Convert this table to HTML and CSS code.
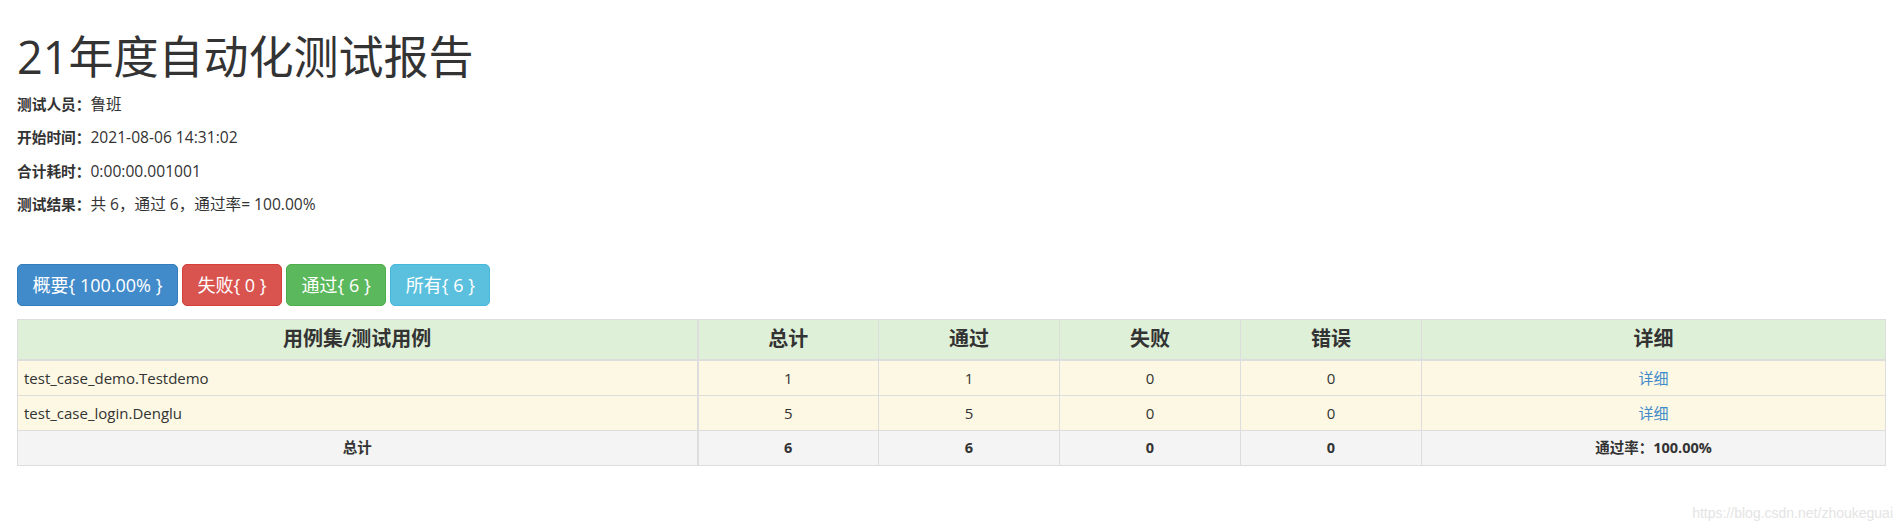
FILE: index.html
```html
<!DOCTYPE html>
<html lang="zh-CN">
<head>
<meta charset="utf-8">
<title>21年度自动化测试报告</title>
<link rel="stylesheet" href="styles.css">
</head>
<body>
<div class="container">
  <h1 class="title">21年度自动化测试报告</h1>
  <div class="attrs">
    <p class="attr"><strong>测试人员：</strong><span class="val">鲁班</span></p>
    <p class="attr"><strong>开始时间：</strong><span class="val">2021-08-06 14:31:02</span></p>
    <p class="attr"><strong>合计耗时：</strong><span class="val">0:00:00.001001</span></p>
    <p class="attr"><strong>测试结果：</strong><span class="val">共 6，通过 6，通过率= 100.00%</span></p>
  </div>
  <div class="btns">
    <a class="btn btn-primary">概要{ 100.00% }</a>
    <a class="btn btn-danger">失败{ 0 }</a>
    <a class="btn btn-success">通过{ 6 }</a>
    <a class="btn btn-info">所有{ 6 }</a>
  </div>
  <table class="result">
    <colgroup>
      <col class="c-name">
      <col class="c-num">
      <col class="c-num">
      <col class="c-num">
      <col class="c-num">
      <col class="c-detail">
    </colgroup>
    <thead>
      <tr class="head">
        <th class="first">用例集/测试用例</th>
        <th>总计</th>
        <th>通过</th>
        <th>失败</th>
        <th>错误</th>
        <th>详细</th>
      </tr>
    </thead>
    <tbody>
      <tr class="row">
        <td class="first name">test_case_demo.Testdemo</td>
        <td>1</td>
        <td>1</td>
        <td>0</td>
        <td>0</td>
        <td><a class="link">详细</a></td>
      </tr>
      <tr class="row">
        <td class="first name">test_case_login.Denglu</td>
        <td>5</td>
        <td>5</td>
        <td>0</td>
        <td>0</td>
        <td><a class="link">详细</a></td>
      </tr>
      <tr class="total">
        <td class="first">总计</td>
        <td>6</td>
        <td>6</td>
        <td>0</td>
        <td>0</td>
        <td>通过率：100.00%</td>
      </tr>
    </tbody>
  </table>
</div>
<div class="watermark">https://blog.csdn.net/zhoukeguai</div>
</body>
</html>
```

FILE: styles.css
```css
html, body {
  margin: 0;
  padding: 0;
}
body {
  position: relative;
  min-height: 100vh;
  background: #fff;
  color: #333;
  font-family: "Open Sans", "Noto Sans CJK SC", sans-serif;
  font-size: 15px;
}
.container {
  padding: 0 17px;
}
.title {
  margin: 30px 0 10px;
  font-size: 45px;
  font-weight: 400;
  line-height: 54px;
  color: #333;
}
.attr {
  margin: 0 0 12.3px;
  font-size: 14.7px;
  line-height: 21px;
}
.attr strong {
  font-weight: 700;
}
.attr .val {
  font-size: 15.6px;
}
.btns {
  display: flex;
  gap: 4px;
  margin-top: 49px;
}
.btn {
  display: inline-block;
  padding: 8px 14.5px;
  font-size: 18px;
  line-height: 24px;
  color: #fff;
  border: 1px solid transparent;
  border-radius: 5px;
  white-space: nowrap;
}
.btn-primary { background: #428bca; border-color: #357ebd; }
.btn-danger { background: #d9534f; border-color: #d43f3a; }
.btn-success { background: #5cb85c; border-color: #4cae4c; }
.btn-info { background: #5bc0de; border-color: #46b8da; }

.result {
  width: 100%;
  margin-top: 13px;
  border-collapse: collapse;
  table-layout: fixed;
  border: 1px solid #ddd;
}
.c-name { width: 680px; }
.c-num { width: 181px; }
.c-detail { width: auto; }
.result th,
.result td {
  border: 1px solid #ddd;
  text-align: center;
  vertical-align: middle;
}
.result th {
  padding: 7px 6px 8px;
  font-size: 20px;
  line-height: 24px;
  font-weight: 700;
  background: #dff0d8;
  border-bottom: 2px solid #ddd;
}
.result td {
  padding: 6px 6px;
  line-height: 22px;
  font-size: 15px;
}
.result .first {
  border-right: 2px solid #ddd;
}
.result td.name {
  text-align: left;
}
.row td {
  background: #fcf8e3;
}
.total td {
  background: #f4f4f4;
  font-size: 14.5px;
  font-weight: 700;
}
.link {
  color: #428bca;
  text-decoration: none;
}
.watermark {
  position: absolute;
  right: 10px;
  bottom: 11px;
  font-family: "Liberation Sans", Arial, sans-serif;
  font-size: 14px;
  line-height: 16px;
  color: #e4e4e4;
}
```
